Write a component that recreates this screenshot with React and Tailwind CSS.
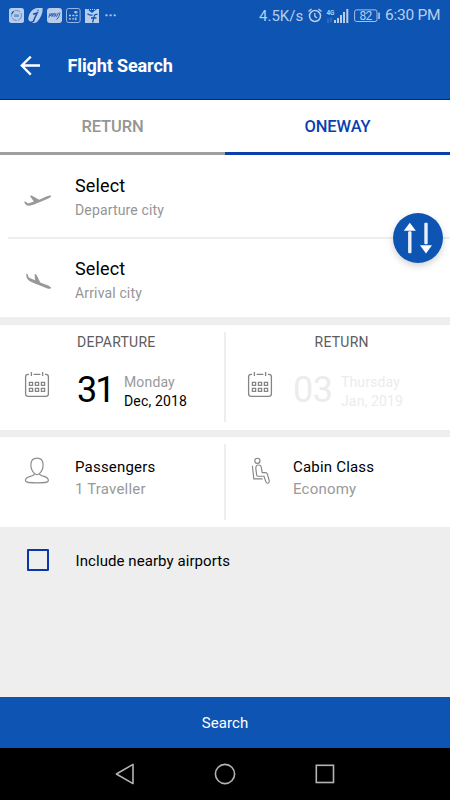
import React from 'react';

const StatusIcons = () => (
  <div className="flex items-center gap-[4px] text-[#b9cdeb]">
    <svg width="15" height="15" viewBox="0 0 15 15">
      <rect width="15" height="15" rx="2.5" fill="currentColor" />
      <circle cx="7.5" cy="7.5" r="5" fill="none" stroke="#4076c2" strokeWidth="0.7" strokeDasharray="6 1" />
      <rect x="5" y="6.3" width="5" height="2.6" rx="0.6" fill="#6f98d1" />
      <path d="M2.6 5.8 L4.6 3.2" stroke="#0e55b3" strokeWidth="1.2" />
    </svg>
    <svg width="15" height="15" viewBox="0 0 15 15">
      <path d="M9 0 H14.6 C15 5 13 9.5 9 14 C7 15.2 5 15 4.6 15 L5 12.8 C2 14.6 0 12.5 0.4 10 C1 5 4 1 9 0Z" fill="currentColor" />
      <path d="M5 6.2 L9.2 5 L6.6 10.2 L5.2 14 M9.4 2.4 L10.6 2.4" fill="none" stroke="#0e55b3" strokeWidth="1.5" />
    </svg>
    <svg width="15" height="15" viewBox="0 0 15 15">
      <rect width="15" height="15" rx="3" fill="currentColor" />
      <path d="M1.8 9.5 L3 5.4 M3 8 L5 5.2 L4.9 9 M5 8 L7.2 5.2 L7.1 9.2 M9 5 Q7.8 8.8 9.4 8.6 L11.6 4.8 M13 4.4 Q12.2 9.6 9.6 11.6" fill="none" stroke="#0e55b3" strokeWidth="0.9" />
    </svg>
    <svg width="15" height="15" viewBox="0 0 15 15">
      <rect x="0.5" y="0.5" width="13.6" height="14" rx="2" fill="none" stroke="currentColor" strokeWidth="0.8" />
      <path d="M3 7.5 H5 M6.3 7.5 H8.3 M9.6 7.5 H11.6 M3 10.8 H5 M6.3 10.8 H8.3 M9.8 9.5 V12.2 M9.8 3 V5.4 M8 4.2 H11.6" stroke="currentColor" strokeWidth="1.3" />
    </svg>
    <svg width="14" height="15" viewBox="0 0 14 15">
      <path d="M0 1 H2 L7 5 L12 1 H14 V15 H0Z" fill="currentColor" />
      <path d="M3 1.5 H11" stroke="currentColor" strokeWidth="1" strokeDasharray="1 1" />
      <path d="M12.5 6.4 H11 Q9.6 6.4 9.2 8.2 L7.6 14.5 M6 10 H11.5 M2.5 5.6 Q4.5 7.8 7.6 6.8" fill="none" stroke="#0e55b3" strokeWidth="1.3" />
    </svg>
    <svg className="ml-[1px]" width="13" height="15" viewBox="0 0 13 15" fill="currentColor">
      <rect x="1.5" y="6.4" width="2" height="1.8" />
      <rect x="5.6" y="6.4" width="2" height="1.8" />
      <rect x="9.7" y="6.4" width="2" height="1.8" />
    </svg>
  </div>
);

const StatusBar = () => (
  <div className="flex h-[31px] items-center justify-between pl-[9px] pr-[10px]">
    <StatusIcons />
    <div className="flex items-center leading-none text-[#b9cdeb]">
      <span className="w-[44px] whitespace-nowrap pt-px text-[15px]">4.5K/s</span>
      <svg className="ml-[5px]" width="14" height="15" viewBox="0 0 14 15" fill="none" stroke="currentColor">
        <circle cx="7" cy="8" r="5.5" strokeWidth="1.5" />
        <path d="M6.8 5 V8.2 L9 10" strokeWidth="1.3" />
        <path d="M0.5 3.6 L3.6 1 M13.5 3.6 L10.4 1" strokeWidth="1.3" />
      </svg>
      <svg className="ml-[4px]" width="24" height="16" viewBox="0 0 24 16" fill="currentColor">
        <text x="0.4" y="6.8" fontSize="8" fontWeight="700" textLength="8" lengthAdjust="spacingAndGlyphs">4G</text>
        <path d="M2 15 V10.5 M5 9.5 V14" stroke="#4d80c8" strokeWidth="1" />
        <rect x="8" y="12" width="2" height="3" />
        <rect x="11" y="10" width="2" height="5" />
        <rect x="14" y="7" width="2" height="8" />
        <rect x="17" y="4" width="2" height="11" />
        <rect x="20.3" y="1" width="2" height="14" />
      </svg>
      <svg className="ml-[4px]" width="27" height="14" viewBox="0 0 27 14">
        <rect x="0.6" y="0.9" width="22.4" height="11.6" rx="2" fill="none" stroke="currentColor" strokeWidth="0.9" />
        <rect x="24.3" y="3.6" width="1.5" height="6.4" fill="currentColor" />
        <text x="5.6" y="10.9" fontSize="12" fill="currentColor" textLength="12.6">82</text>
      </svg>
      <span className="ml-[4px] w-[55px] whitespace-nowrap pt-px text-[15.5px] tracking-[-0.25px]">6:30 PM</span>
    </div>
  </div>
);

const CalendarIcon = () => (
  <svg width="26" height="27" viewBox="0 0 26 27" fill="none" stroke="#858585" strokeWidth="1.3">
    <path d="M5 3.4 H4 Q1.6 3.4 1.6 5.8 V22.8 Q1.6 25.3 4 25.3 H22 Q24.4 25.3 24.4 22.8 V5.8 Q24.4 3.4 22 3.4 H21 M9.6 3.4 H16.4" />
    <path d="M7.4 1 V5 M18.6 1 V5" />
    <path d="M5.4 11.4 H8.6 V14.4 H5.4Z M11.4 11.4 H14.6 V14.4 H11.4Z M17.4 11.4 H20.6 V14.4 H17.4Z M5.4 17.4 H8.6 V20.4 H5.4Z M11.4 17.4 H14.6 V20.4 H11.4Z M17.4 17.4 H20.6 V20.4 H17.4Z" />
  </svg>
);

const PersonIcon = () => (
  <svg width="26" height="27" viewBox="0 0 26 27" fill="none" stroke="#8f8f8f" strokeWidth="1.2">
    <path d="M13 1.2 C17 1.2 19.1 4 19.1 8 C19.1 11.6 17.3 14.8 15.6 16.4 C15.3 17.8 16.2 18.3 18.2 18.8 C22 19.6 24.4 21 24.4 23.6 C24.4 25.4 22.5 25.9 13 25.9 C3.5 25.9 1.4 25.4 1.4 23.6 C1.4 21 4 19.6 7.8 18.8 C9.8 18.3 10.7 17.8 10.4 16.4 C8.7 14.8 6.9 11.6 6.9 8 C6.9 4 9 1.2 13 1.2Z" />
    <path d="M10.4 16.6 Q13 18.6 15.6 16.6" />
  </svg>
);

const SeatIcon = () => (
  <svg width="20" height="28" viewBox="0 0 20 28" fill="none" stroke="#858585" strokeWidth="1.15">
    <circle cx="7.4" cy="3.8" r="2.6" />
    <path d="M2.4 8.8 L3.8 21.8 H12.6" />
    <path d="M6 9.6 Q6.4 8 8.4 8 Q10.8 8 11.2 9.8 L12.2 15.6 H15.4 Q17 15.6 17.4 17.2 L19.2 23.6 Q19.5 25.8 18 26.2 Q16.4 26.4 15.8 24.6 L14 19.2 H7.8 Q6.6 19 6.6 17.6 L5.8 11.4 Z" />
  </svg>
);

const DeparturePlane = () => (
  <svg width="28" height="12" viewBox="0 0 28 12" fill="#999999">
    <path d="M0.2 6.8 L1.3 6.4 L4.2 8.4 L9.8 6.6 L5.9 1 L7.6 0.5 L15.2 4.8 L23 1.2 C25 0.3 27 0.1 27.2 0.8 C27.4 1.8 25.8 2.9 23.8 3.8 L10 9.6 C7 10.8 4.2 11 2.6 10.2 C1.4 9.4 0.6 8.2 0.2 6.8Z" />
  </svg>
);

const ArrivalPlane = () => (
  <svg width="26" height="17" viewBox="0 0 26 17" fill="#999999">
    <path d="M0.4 0.6 L1.5 0.9 L2.7 4.4 L9 7.3 L8.6 1 L10.3 1.5 L14.3 9.6 L22.2 12.6 C24.2 13.4 25.3 14.6 25 15.3 C24.7 16 22.8 15.9 20.8 15.2 L8.2 10.3 C5 9 2.2 7.5 1.2 5.8 C0.4 4.2 0.1 2.4 0.4 0.6Z" />
  </svg>
);

const CityRow = ({ icon, hint }) => (
  <div className="flex">
    <div className="w-[75px] shrink-0">{icon}</div>
    <div>
      <div className="text-[18px] leading-6 tracking-[0.15px] text-black">Select</div>
      <div className="text-[14px] leading-6 tracking-[0.15px] text-[#959595]">{hint}</div>
    </div>
  </div>
);

const Tabs = () => (
  <div className="flex h-[55px] text-[16.5px] font-medium tracking-[-0.1px]">
    <div className="flex flex-1 items-center justify-center border-b-3 border-[#9f9f9f] pt-[3px] text-[#959595]">
      <span>RETURN</span>
    </div>
    <div className="flex flex-1 items-center justify-center border-b-3 border-[#0c3fae] pt-[3px] text-[#0c3fae]">
      <span>ONEWAY</span>
    </div>
  </div>
);

const SwapButton = () => (
  <button className="absolute left-[392.5px] top-[58.3px] flex size-[50px] items-center justify-center rounded-full bg-[#0e55b3] shadow-[0_3px_7px_rgba(0,0,0,0.18)]">
    <svg width="30" height="32" viewBox="0 0 30 32" fill="#ffffff">
      <path d="M6.8 0.8 L12.8 8.8 H0.8Z" />
      <rect x="5.1" y="9.2" width="3.4" height="22" rx="1" fill="#e9f0fa" />
      <rect x="21.3" y="0.8" width="3.4" height="21.5" rx="1" fill="#e9f0fa" />
      <path d="M23 31.4 L29 23.2 H17Z" />
    </svg>
  </button>
);

export default function App() {
  return (
    <div className="flex h-[800px] w-[450px] flex-col overflow-hidden bg-[#eeeeee] font-['Roboto',sans-serif]">
      {/* Header */}
      <header className="h-[100px] border-b border-[#00259b] bg-[#0e55b3]">
        <StatusBar />
        <div className="flex h-[69px] items-center pl-[20px] text-white">
          <svg width="21" height="20" viewBox="0 0 21 20" fill="none" stroke="currentColor" strokeWidth="2.3">
            <path d="M20 9.5 H1.8 M10.8 0.6 L1.8 9.5 L10.8 18.6" />
          </svg>
          <h1 className="ml-[26.5px] text-[18px] font-bold leading-none tracking-[-0.12px]">Flight Search</h1>
        </div>
      </header>

      {/* Route */}
      <section className="bg-white">
        <Tabs />
        <div className="relative h-[162px]">
          <div className="h-[82px] pt-[19px]">
            <CityRow icon={<div className="pl-[24px] pt-[21px]"><DeparturePlane /></div>} hint="Departure city" />
          </div>
          <div className="ml-2 h-[2px] bg-[#eeeeee]" />
          <div className="pt-[18px]">
            <CityRow icon={<div className="pl-[26px] pt-[16px]"><ArrivalPlane /></div>} hint="Arrival city" />
          </div>
          <SwapButton />
        </div>
      </section>

      {/* Dates */}
      <section className="mt-[8px] flex h-[105px] bg-white">
        <div className="flex w-[224px]">
          <div className="w-[77px] pl-[24px] pt-[46px]"><CalendarIcon /></div>
          <div>
            <div className="pt-[9px] text-[14px] leading-4 tracking-[0.25px] text-[#5c5c5c]">DEPARTURE</div>
            <div className="mt-[21px] flex">
              <span className="w-[47px] text-[36px] leading-[38px] tracking-[-2px] text-black">31</span>
              <div className="pt-[2px] text-[14px] leading-[19px] tracking-[0.15px]">
                <div className="text-[#999999]">Monday</div>
                <div className="text-black">Dec, 2018</div>
              </div>
            </div>
          </div>
        </div>
        <div className="mt-[7px] h-[90px] w-[2px] bg-[#eeeeee]" />
        <div className="flex">
          <div className="w-[67px] pl-[21px] pt-[46px]"><CalendarIcon /></div>
          <div>
            <div className="pl-[21.5px] pt-[9px] text-[14px] leading-4 tracking-[0.25px] text-[#5c5c5c]">RETURN</div>
            <div className="mt-[21px] flex text-[#ececec]">
              <span className="w-[48px] text-[36px] leading-[38px] tracking-[-0.6px]">03</span>
              <div className="pt-[2px] text-[14px] leading-[19px] tracking-[0.15px]">
                <div>Thursday</div>
                <div>Jan, 2019</div>
              </div>
            </div>
          </div>
        </div>
      </section>

      {/* Travellers and class */}
      <section className="mt-[7px] flex h-[90px] bg-white pt-[7px]">
        <div className="flex w-[224px]">
          <div className="w-[75px] pl-[24px] pt-[13px]"><PersonIcon /></div>
          <div className="pt-[12px] text-[15px] leading-[22px] tracking-[0.2px]">
            <div className="text-black">Passengers</div>
            <div className="text-[#999999]">1 Traveller</div>
          </div>
        </div>
        <div className="h-[76px] w-[2px] bg-[#eeeeee]" />
        <div className="flex">
          <div className="w-[67px] pl-[24px] pt-[13px]"><SeatIcon /></div>
          <div className="pt-[12px] text-[15px] leading-[22px] tracking-[0.2px]">
            <div className="text-black">Cabin Class</div>
            <div className="text-[#999999]">Economy</div>
          </div>
        </div>
      </section>

      <label className="flex h-[66px] items-center pl-[27px]">
        <span className="size-[22px] rounded-[1px] border-2 border-[#0a38ac]" />
        <span className="ml-[26.5px] pt-[2px] text-[15px] tracking-[0.07px] text-black">Include nearby airports</span>
      </label>

      <button className="mt-auto h-[51px] shrink-0 bg-[#0e55b3] pt-[2px] text-[15px] tracking-[0.1px] text-white">Search</button>

      {/* Android navigation */}
      <nav className="flex h-[52px] shrink-0 items-center justify-center gap-[78px] bg-black">
        <svg width="22" height="22" viewBox="0 0 22 22" fill="none" stroke="#b4b4b4" strokeWidth="1.6">
          <path d="M2.4 11 L19 1.4 V20.6Z" strokeLinejoin="round" />
        </svg>
        <svg width="22" height="22" viewBox="0 0 22 22" fill="none" stroke="#b4b4b4" strokeWidth="1.6">
          <circle cx="11" cy="11" r="9.6" />
        </svg>
        <svg width="22" height="22" viewBox="0 0 22 22" fill="none" stroke="#b4b4b4" strokeWidth="1.6">
          <rect x="2.3" y="2.3" width="17.2" height="17.2" />
        </svg>
      </nav>
    </div>
  );
}
